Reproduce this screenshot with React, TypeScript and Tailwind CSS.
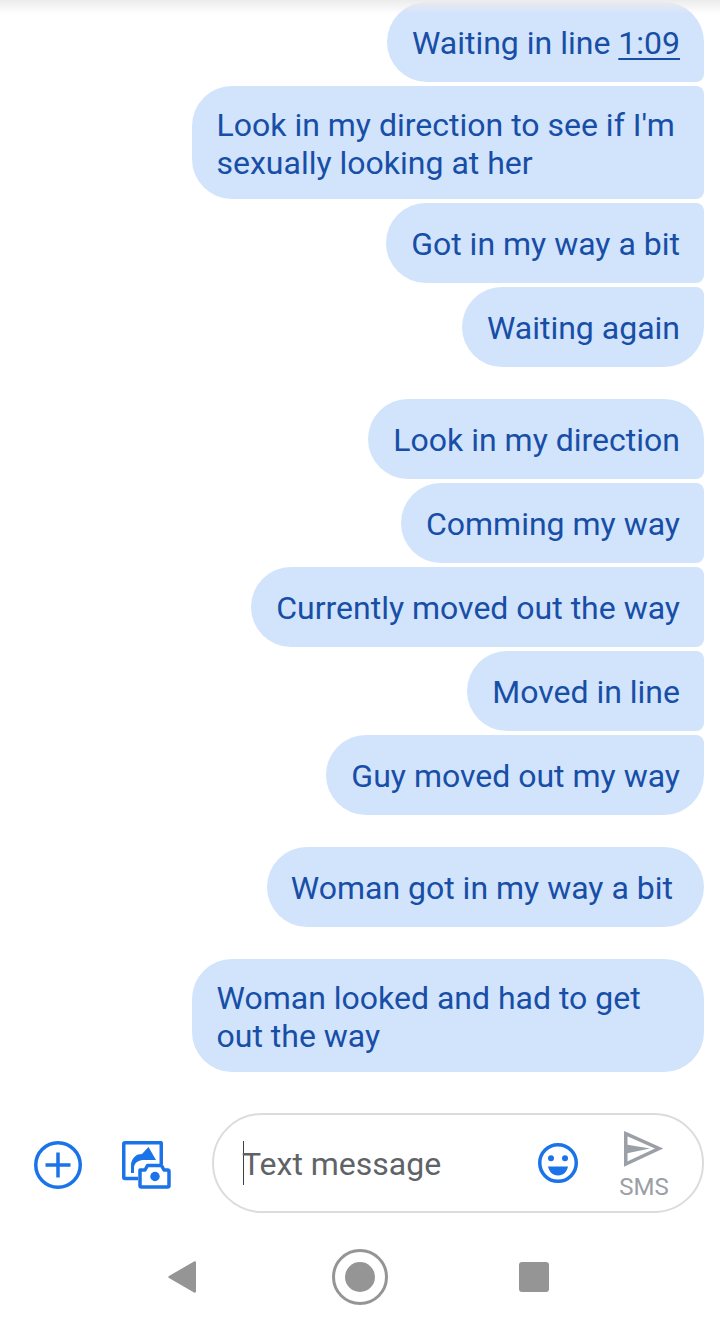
import React from 'react';

type Msg = { text: string; time?: string; wide?: boolean; roomy?: boolean };

const groups: Msg[][] = [
  [
    { text: 'Waiting in line ', time: '1:09' },
    { text: "Look in my direction to see if I'm\nsexually looking at her", wide: true },
    { text: 'Got in my way a bit' },
    { text: 'Waiting again' },
  ],
  [
    { text: 'Look in my direction' },
    { text: 'Comming my way' },
    { text: 'Currently moved out the way' },
    { text: 'Moved in line' },
    { text: 'Guy moved out my way' },
  ],
  [{ text: 'Woman got in my way a bit', roomy: true }],
  [{ text: 'Woman looked and had to get\nout the way', wide: true }],
];

const corner = (groupLen: number, i: number) => {
  // tail corner on the right side gets squared off inside a group
  if (groupLen === 1) return 'rounded-[40px]';
  if (i === 0) return 'rounded-tl-[40px] rounded-bl-[40px] rounded-tr-[40px] rounded-br-[8px]';
  if (i === groupLen - 1) return 'rounded-tl-[40px] rounded-bl-[40px] rounded-tr-[8px] rounded-br-[40px]';
  return 'rounded-tl-[40px] rounded-bl-[40px] rounded-tr-[8px] rounded-br-[8px]';
};

const Bubble = ({ msg, className }: { msg: Msg; className: string }) => (
  <div
    className={`bg-[#d2e3fc] text-[#174ea6] text-[32px] leading-[38px] whitespace-pre-line ${
      msg.wide ? 'w-[512px] pl-[24.5px] pt-[19.5px] pb-[17.5px]' : 'pt-[22px] pb-[20px]'
    } ${msg.roomy ? 'pl-[24px] pr-[31px]' : 'pr-[24px]'} ${!msg.wide && !msg.roomy ? 'pl-[25px]' : ''} ${className}`}
  >
    {msg.text}
    {msg.time && <span className="underline underline-offset-[4px] decoration-[1.5px]">{msg.time}</span>}
  </div>
);

const AddIcon = () => (
  <svg width="48" height="48" viewBox="0 0 48 48" fill="none" stroke="#1a73e8" strokeWidth="3.500">
    <circle cx="24" cy="24" r="22.25" />
    <path d="M24 11.500v25M11.500 24h25" />
  </svg>
);

const GalleryIcon = () => (
  <svg width="49" height="48" viewBox="0 0 49 48" fill="none">
    <path d="M16 37.500H3a1.250 1.250 0 0 1-1.250-1.250V3A1.250 1.250 0 0 1 3 1.750h36A1.250 1.250 0 0 1 39.250 3v20" stroke="#1a73e8" strokeWidth="3.500" />
    <path d="M9 32v-8c0-4 3-9 7-10.500l4 -.5 6.500-7L34 19H22c-5 0-9 2-10 7v6z" fill="#1a73e8" />
    <path d="M18 29h5l2.500-4.500h14L42 29h3.500a1.500 1.500 0 0 1 1.500 1.500v14a1.500 1.500 0 0 1-1.500 1.500h-26a1.500 1.500 0 0 1-1.500-1.500z" fill="#fff" stroke="#1a73e8" strokeWidth="3.500" strokeLinejoin="round" />
    <circle cx="33" cy="35.500" r="4.700" fill="#1a73e8" />
  </svg>
);

const EmojiIcon = () => (
  <svg width="40" height="40" viewBox="0 0 40 40" fill="none">
    <circle cx="20" cy="20" r="18.250" stroke="#1a73e8" strokeWidth="3.500" />
    <circle cx="13" cy="15.300" r="3" fill="#1a73e8" />
    <circle cx="27" cy="15.300" r="3" fill="#1a73e8" />
    <path d="M10 23.500h20c-1 5-4.500 9-10 9s-9-4-10-9z" fill="#1a73e8" />
  </svg>
);

const SendIcon = () => (
  <svg width="40" height="36" viewBox="0 0 40 36" fill="none">
    <path d="M1.750 2.700L35 17.500 1.750 33z" stroke="#9aa0a6" strokeWidth="3.500" />
    <path d="M2 13.500l24 4-24 5z" fill="#9aa0a6" />
  </svg>
);

export default function App() {
  return (
    <div className="relative w-[720px] h-[1325px] bg-white overflow-hidden font-['Roboto',sans-serif] flex flex-col">
      <div className="absolute top-0 left-0 right-0 h-[14px] bg-gradient-to-b from-[#ececec] to-transparent" />

      <div className="flex flex-col items-end gap-[32px] pt-[2px] pr-[16px]">
        {groups.map((group, gi) => (
          <div key={gi} className="flex flex-col items-end gap-[4px]">
            {group.map((msg, i) => (
              <Bubble key={i} msg={msg} className={corner(group.length, i)} />
            ))}
          </div>
        ))}
      </div>

      <div className="flex items-center mt-[41px] pl-[34px] pr-[16px]">
        <div className="mt-[4px]">
          <AddIcon />
        </div>
        <div className="ml-[40px] mt-[4px] w-[48px]">
          <GalleryIcon />
        </div>
        <div className="ml-[42px] w-[492px] h-[100px] rounded-[50px] border-2 border-[#dadce0] flex items-center pl-[29px]">
          <div className="w-[1px] h-[44px] bg-[#3c4043]" />
          <span className="text-[#5f6368] text-[32px] leading-[38px] flex-1 -ml-[2px] mt-[2px]">Text message</span>
          <EmojiIcon />
          <div className="flex flex-col items-center w-[48px] ml-[42px] mr-[34px] mt-[6px]">
            <SendIcon />
            <span className="text-[#9aa0a6] text-[24px] leading-[28px] mt-[6px]">SMS</span>
          </div>
        </div>
      </div>

      <div className="flex items-center mt-[36px] pl-[168px]">
        <svg width="28" height="32" viewBox="0 0 28 32" fill="#959595">
          <path d="M1 17a1.200 1.200 0 0 1 0-2L26 0.500c1-.5 2 0 2 1v29c0 1-1 1.500-2 1z" />
        </svg>
        <div className="ml-[136px] w-[56px] h-[56px] rounded-full border-[3px] border-[#959595] flex items-center justify-center">
          <div className="w-[30px] h-[30px] rounded-full bg-[#959595]" />
        </div>
        <div className="ml-[131px] w-[30px] h-[30px] rounded-[3px] bg-[#959595]" />
      </div>
    </div>
  );
}
